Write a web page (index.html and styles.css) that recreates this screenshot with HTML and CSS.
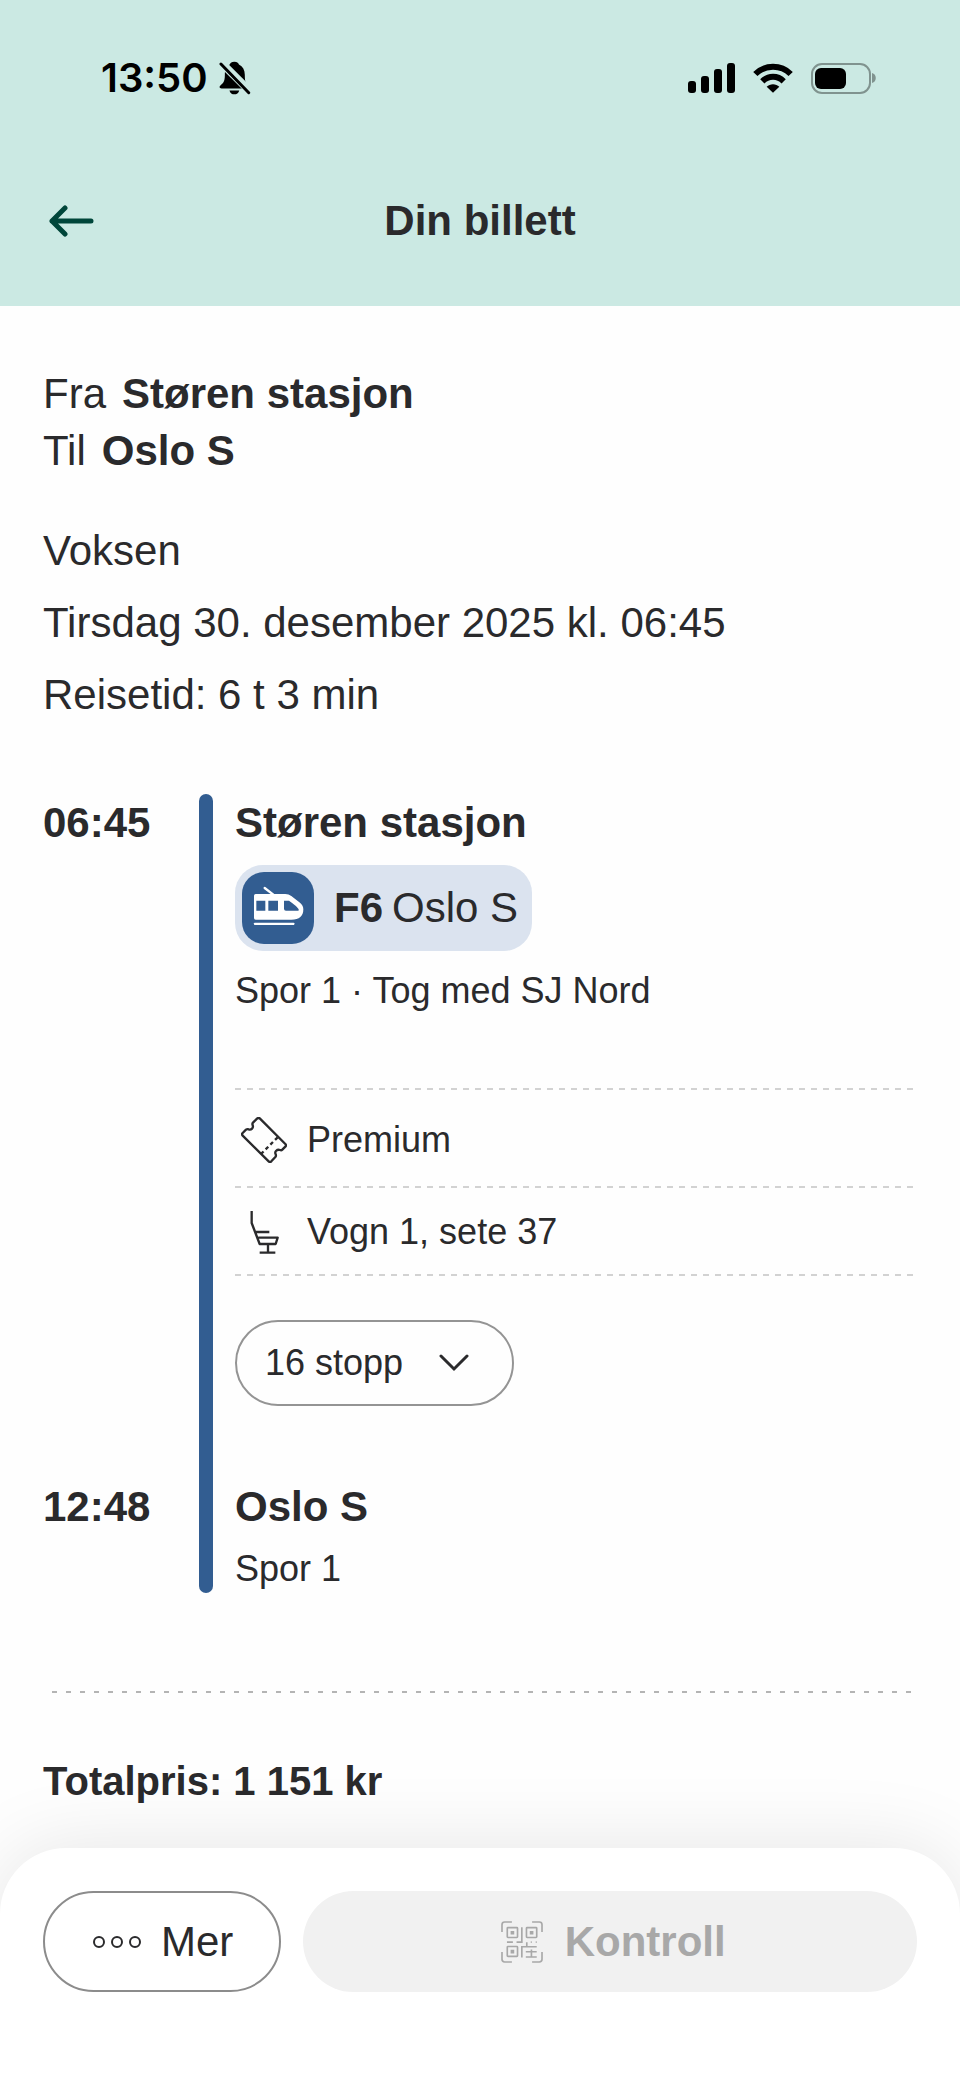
FILE: index.html
```
<!DOCTYPE html>
<html lang="no">

<head>
    <meta charset="UTF-8">
    <meta name="viewport" content="width=device-width, initial-scale=1.0">
    <title>Din billett</title>
    <link rel="stylesheet" href="styles.css">
</head>

<body>

    <header class="header">
        <div class="status-bar">
            <div class="status-left">
                <span class="clock">13:50</span>
                <svg class="bell" viewBox="0 0 96 104" aria-hidden="true">
                    <path d="M46 2c-9 0-14 5-14 9C20 17 17 28 17 42c0 22-6 26-13 32-6 6-3 10 3 10h78c6 0 9-4 3-10-7-6-10-10-10-32 0-14-6-25-18-31 0-4-5-9-14-9zM31 90h30c-2 8-8 12-15 12s-13-4-15-12z" />
                    <path class="bell-gap" d="M6 5L98 97" />
                    <path class="bell-slash" d="M5 9L90 97" />
                </svg>
            </div>
            <div class="status-right">
                <svg class="signal" viewBox="0 0 47 30" aria-hidden="true">
                    <rect x="0" y="18" width="8" height="12" rx="3" />
                    <rect x="13" y="13" width="8" height="17" rx="3" />
                    <rect x="26" y="6" width="8" height="24" rx="3" />
                    <rect x="39" y="0" width="8" height="30" rx="3" />
                </svg>
                <svg class="wifi" viewBox="0 0 120 90" aria-hidden="true">
                    <path class="wifi-arc" d="M7 33C36 4 84 4 113 33" />
                    <path class="wifi-arc" d="M28 55C46 37 74 37 92 55" />
                    <path d="M60 89L41 71c10-10 28-10 38 0z" />
                </svg>
                <svg class="battery" viewBox="0 0 65 31" aria-hidden="true">
                    <rect class="battery-case" x="1" y="1" width="58" height="29" rx="10" />
                    <rect x="4" y="5" width="31" height="21" rx="6" />
                    <path class="battery-nub" d="M61 10c5 1 5 9 0 10z" />
                </svg>
            </div>
        </div>
        <div class="title-bar">
            <button class="back-button" type="button" aria-label="Tilbake">
                <svg viewBox="0 0 52 32" aria-hidden="true">
                    <path d="M21 3L8 16l13 13M8 16h39" />
                </svg>
            </button>
            <h1>Din billett</h1>
        </div>
    </header>

    <main class="ticket">
        <section class="route">
            <p>Fra <strong>Støren stasjon</strong></p>
            <p>Til <strong>Oslo S</strong></p>
        </section>

        <section class="details">
            <p>Voksen</p>
            <p>Tirsdag 30. desember 2025 kl. 06:45</p>
            <p>Reisetid: 6 t 3 min</p>
        </section>

        <section class="journey">
            <time class="departure">06:45</time>
            <div class="line"></div>
            <div class="leg">
                <h2>Støren stasjon</h2>
                <div class="service">
                    <span class="train-icon">
                        <svg viewBox="0 0 216 216" aria-hidden="true">
                            <path class="pantograph" d="M68 48L94 68" />
                            <path class="train-body" fill-rule="evenodd" d="M41 66H130q10 0 18 6L174 92q10 8 10 20 0 31-36 31H41q-5 0-5-5V71q0-5 5-5zM43 86v30h27V86zM79 86v30h29V86zM126 86v24q0 6 6 6h34q7 0 3-6-4-7-28-24z" />
                            <rect class="train-body" x="36" y="152" width="121" height="7" rx="2" />
                        </svg>
                    </span>
                    <p><strong>F6</strong> Oslo S</p>
                </div>
                <p class="track">Spor 1 · Tog med SJ Nord</p>

                <ul class="extras">
                    <li class="premium">
                        <svg viewBox="0 0 138 138" aria-hidden="true">
                            <path d="M57 5L133 81q4 4 0 8l-9 9q-3 3-7 1c-9-3-17 5-13 13q2 4-1 8l-12 13q-4 4-8 0L5 56q-4-4 0-8l10-10q4-3 8-1c8 3 15-5 12-12q-2-5 1-8L48 5q5-4 9 0z" />
                            <path stroke-dasharray="11 9" d="M110 61L61 110" />
                        </svg>
                        Premium
                    </li>
                    <li class="seat">
                        <svg viewBox="0 0 138 138" aria-hidden="true">
                            <path d="M32 6v36l24 63h48l6-19H52M45 69h40M81 105v26M56 131h47" />
                        </svg>
                        Vogn 1, sete 37
                    </li>
                </ul>

                <button class="stops-button" type="button" aria-expanded="false">
                    16 stopp
                    <svg viewBox="0 0 30 18" aria-hidden="true">
                        <path d="M2 2l13 13L28 2" />
                    </svg>
                </button>
            </div>
            <time class="arrival">12:48</time>
            <div class="destination">
                <h2>Oslo S</h2>
                <p>Spor 1</p>
            </div>
        </section>

        <p class="total">Totalpris: 1 151 kr</p>
    </main>

    <footer class="actions">
        <button class="more-button" type="button">
            <svg viewBox="0 0 48 12" aria-hidden="true">
                <circle cx="6" cy="6" r="5" />
                <circle cx="24" cy="6" r="5" />
                <circle cx="42" cy="6" r="5" />
            </svg>
            Mer
        </button>
        <button class="control-button" type="button" disabled>
            <svg viewBox="0 0 127 127" aria-hidden="true">
                <path d="M3 33V11q0-8 8-8h22M94 3h22q8 0 8 8v22M124 94v22q0 8-8 8H94M33 124H11q-8 0-8-8V94" />
                <rect x="19" y="20" width="31" height="30" rx="2" />
                <rect x="77" y="20" width="31" height="30" rx="2" />
                <rect x="19" y="77" width="31" height="30" rx="2" />
                <path d="M63 19v45H47M18 64h18M63 110V78h45M78 64v14M90 64h3M105 64h3M75 93h33M75 109h33M92 86v23" />
                <path class="qr-dot" d="M29 30h11v11H29zM87 30h11v11H87zM29 87h11v11H29z" />
            </svg>
            Kontroll
        </button>
    </footer>

</body>

</html>
```
FILE: styles.css
```
* {
    box-sizing: border-box;
}

body {
    font-family: "Liberation Sans", Arial, sans-serif;
    font-size: 42px;
    color: #2a2a2c;
    background-color: #fefefe;
    margin: 0;
    min-height: 100vh;
    display: flex;
    flex-direction: column;
}

h1,
h2,
p,
ul {
    margin: 0;
    padding: 0;
}

h1,
h2 {
    font-size: 42px;
    line-height: 57px;
}

button {
    font: inherit;
    color: inherit;
    background: none;
    border: none;
    padding: 0;
    cursor: pointer;
}

svg {
    display: block;
    flex-shrink: 0;
}

/* Header */
.header {
    background-color: #cbe9e3;
    padding: 54px 44px 57px;
}

.status-bar {
    display: flex;
    justify-content: space-between;
    align-items: center;
    height: 48px;
    padding: 0 40px 0 57px;
    color: #000;
}

.status-left,
.status-right {
    display: flex;
    align-items: center;
}

.status-left {
    gap: 11px;
}

.status-right {
    gap: 18px;
}

.clock {
    font-family: Inter, "Liberation Sans", sans-serif;
    font-size: 40px;
    font-weight: 600;
    line-height: 48px;
}

.bell {
    width: 32px;
    height: 34px;
}

.bell-gap {
    stroke: #cbe9e3;
    stroke-width: 24;
}

.bell-slash {
    stroke: #000;
    stroke-width: 9;
    stroke-linecap: round;
}

.signal {
    width: 47px;
    height: 30px;
}

.wifi {
    width: 40px;
    height: 30px;
}

.wifi-arc {
    fill: none;
    stroke: #000;
    stroke-width: 18;
}

.battery {
    width: 65px;
    height: 31px;
}

.battery-case {
    fill: none;
    stroke: #80938f;
    stroke-width: 2;
}

.battery-nub {
    fill: #80938f;
}

.title-bar {
    display: grid;
    grid-template-columns: 52px 1fr 52px;
    align-items: center;
    margin-top: 90px;
}

.back-button svg {
    width: 52px;
    height: 32px;
    fill: none;
    stroke: #00463a;
    stroke-width: 5;
    stroke-linecap: round;
    stroke-linejoin: round;
}

.title-bar h1 {
    text-align: center;
}

/* Ticket */
.ticket {
    padding: 59px 43px 37px;
}

.route p {
    display: flex;
    gap: 16px;
    line-height: 57px;
}

.details {
    line-height: 72px;
    margin-top: 36px;
}

.journey {
    display: grid;
    grid-template-columns: 134px 14px 1fr;
    column-gap: 22px;
    row-gap: 72px;
    margin-top: 63px;
    padding-bottom: 100px;
    background: repeating-linear-gradient(90deg, #b4b4b4 0 5px, transparent 5px 14px) 9px bottom / 100% 2px no-repeat;
}

.departure,
.arrival {
    grid-column: 1;
    font-weight: bold;
    line-height: 57px;
}

.line {
    grid-column: 2;
    grid-row: 1 / 3;
    background-color: #325d91;
    border-radius: 7px;
}

.leg,
.destination {
    grid-column: 3;
}

.service {
    display: flex;
    align-items: center;
    gap: 20px;
    width: fit-content;
    height: 86px;
    margin-top: 14px;
    padding: 0 14px 0 7px;
    background-color: #dbe3ef;
    border-radius: 28px;
}

.service p {
    display: flex;
    gap: 9px;
}

.train-icon {
    width: 72px;
    height: 72px;
    background-color: #325d91;
    border-radius: 22px;
}

.train-body {
    fill: #fff;
}

.pantograph {
    stroke: #fff;
    stroke-width: 7;
    stroke-linecap: round;
}

.track,
.destination p {
    font-size: 36px;
    line-height: 48px;
}

.track {
    margin-top: 16px;
}

.extras {
    list-style: none;
    margin-top: 73px;
    font-size: 36px;
    line-height: 48px;
    background: repeating-linear-gradient(90deg, #d2d2d2 0 6px, transparent 6px 12px) left bottom / 100% 2px no-repeat;
}

.extras li {
    display: flex;
    align-items: center;
    gap: 20px;
    background: repeating-linear-gradient(90deg, #d2d2d2 0 6px, transparent 6px 12px) left top / 100% 2px no-repeat;
}

.premium {
    padding: 28px 6px 22px;
}

.seat {
    padding: 22px 6px 20px;
}

.extras svg {
    width: 46px;
    height: 46px;
    fill: none;
    stroke: #2a2a2c;
    stroke-width: 7;
    stroke-linejoin: round;
}

.stops-button {
    display: flex;
    align-items: center;
    gap: 36px;
    height: 86px;
    margin-top: 44px;
    padding: 0 43px 0 28px;
    font-size: 36px;
    border: 2px solid #949494;
    border-radius: 43px;
}

.stops-button svg {
    width: 30px;
    height: 18px;
    fill: none;
    stroke: #2a2a2c;
    stroke-width: 3;
    stroke-linecap: round;
}

.destination p {
    margin-top: 10px;
}

.total {
    margin-top: 60px;
    font-size: 40px;
    font-weight: bold;
    line-height: 56px;
}

/* Bottom actions */
.actions {
    display: flex;
    gap: 22px;
    margin-top: auto;
    padding: 43px 43px 95px;
    background-color: #fff;
    border-radius: 66px 66px 0 0;
    box-shadow: 0 0 80px rgba(0, 0, 0, 0.1);
}

.more-button,
.control-button {
    display: flex;
    align-items: center;
    justify-content: center;
    height: 101px;
    border-radius: 51px;
}

.more-button {
    gap: 20px;
    padding: 0 46px 0 48px;
    border: 2px solid #8c8c8c;
}

.more-button svg {
    width: 48px;
    height: 12px;
    fill: none;
    stroke: #2a2a2c;
    stroke-width: 2;
}

.control-button {
    flex: 1;
    gap: 22px;
    padding-left: 6px;
    color: #a8a8a8;
    background-color: #f1f1f1;
    font-weight: bold;
    cursor: default;
}

.control-button svg {
    width: 42px;
    height: 42px;
    fill: none;
    stroke: #a8a8a8;
    stroke-width: 5;
}

.control-button .qr-dot {
    fill: #a8a8a8;
    stroke: none;
}
```
